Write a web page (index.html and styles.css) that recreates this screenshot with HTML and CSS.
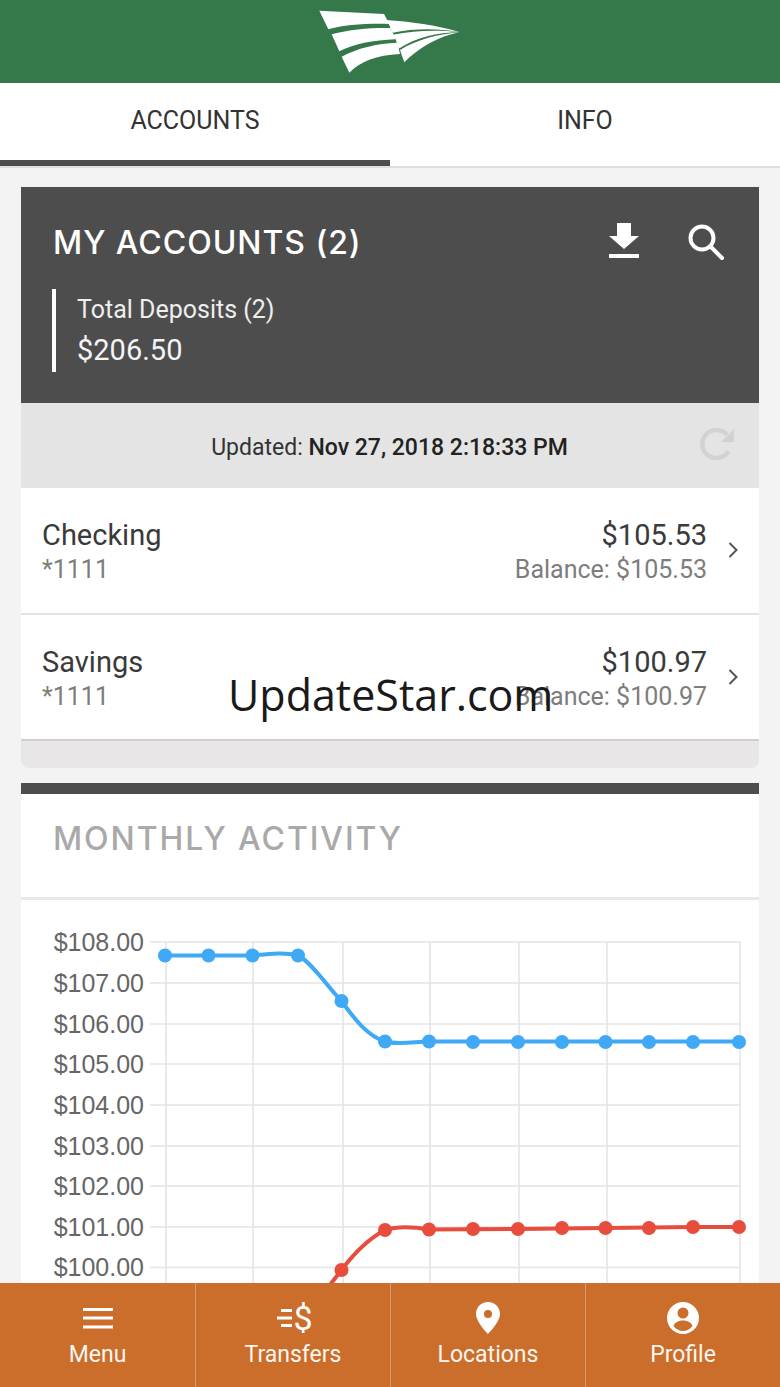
FILE: index.html
```html
<!DOCTYPE html>
<html lang="en">
<head>
<meta charset="utf-8">
<title>My Accounts</title>
<link rel="stylesheet" href="styles.css">
</head>
<body>
<div class="app">
  <header class="brand">
    <svg class="logo" viewBox="0 0 780 270" width="260" height="90" aria-hidden="true">
      <path d="M178 32 L372 42 L388 72 C320 70 250 75 205 88 Z"/>
      <path d="M215 103 C270 88 330 83 392 84 L407 118 C340 120 280 132 238 154 Z"/>
      <path d="M245 170 C290 145 350 130 412 128 L420 162 C350 165 300 185 268 218 Z"/>
      <path d="M378 60 C450 65 530 75 598 96 C530 84 460 85 398 98 L388 76 Z"/>
      <path d="M397 104 C470 90 530 90 598 96 C530 98 470 112 416 146 L407 118 Z"/>
      <path d="M420 150 C470 120 530 103 598 97 C540 108 480 140 433 187 L424 162 Z"/>
    </svg>
  </header>
  <nav class="tabs">
    <div class="tab tab-active">ACCOUNTS</div>
    <div class="tab">INFO</div>
  </nav>
  <main class="content">
    <section class="summary">
      <div class="summary-head">
        <h1 class="summary-title">MY ACCOUNTS (2)</h1>
        <div class="summary-actions">
          <svg class="icon-download" viewBox="0 0 30 36" width="30" height="36" aria-hidden="true"><path d="M8 0H22V13H30L15 26 0 13H8Z"/><rect x="0" y="31" width="30" height="4"/></svg>
          <svg class="icon-search" viewBox="0 0 38 38" width="38" height="38" aria-hidden="true"><circle cx="15" cy="15" r="11.500"/><path d="M23.500 23.500L35 35"/></svg>
        </div>
      </div>
      <div class="total">
        <div class="total-label">Total Deposits (2)</div>
        <div class="total-value">$206.50</div>
      </div>
    </section>
    <div class="updated">
      <span>Updated: <b>Nov 27, 2018 2:18:33 PM</b></span>
      <svg class="icon-refresh" viewBox="0 0 36 36" width="36" height="36" aria-hidden="true"><path d="M28.500 24A14 14 0 1 1 27 8"/><path class="fill" d="M34 2V15H21Z"/></svg>
    </div>
    <ul class="accounts">
      <li class="account">
        <div class="account-left"><div class="account-name">Checking</div><div class="account-sub">*1111</div></div>
        <div class="account-right"><div class="account-amt">$105.53</div><div class="account-sub">Balance: $105.53</div></div>
        <svg class="chev" viewBox="0 0 10 16" width="10" height="16" aria-hidden="true"><path d="M1.500 1L8.500 8 1.500 15"/></svg>
      </li>
      <li class="account">
        <div class="account-left"><div class="account-name">Savings</div><div class="account-sub">*1111</div></div>
        <div class="account-right"><div class="account-amt">$100.97</div><div class="account-sub">Balance: $100.97</div></div>
        <svg class="chev" viewBox="0 0 10 16" width="10" height="16" aria-hidden="true"><path d="M1.500 1L8.500 8 1.500 15"/></svg>
      </li>
    </ul>
    <div class="accounts-foot"></div>
    <section class="activity">
      <h2 class="activity-title">MONTHLY ACTIVITY</h2>
      <svg class="chart" viewBox="21 900 738 500" width="738" height="500" aria-label="Monthly activity chart">
        <g class="grid">
          <path d="M150 942H740M150 983H740M150 1024H740M150 1064H740M150 1105H740M150 1146H740M150 1186H740M150 1227H740M150 1267.500H740"/>
          <path d="M166 942V1400M253 942V1400M343 942V1400M430 942V1400M519 942V1400M607 942V1400M740 942V1400"/>
        </g>
        <g class="ylabels">
          <text x="144" y="951">$108.00</text>
          <text x="144" y="992">$107.00</text>
          <text x="144" y="1033">$106.00</text>
          <text x="144" y="1073">$105.00</text>
          <text x="144" y="1114">$104.00</text>
          <text x="144" y="1155">$103.00</text>
          <text x="144" y="1195">$102.00</text>
          <text x="144" y="1236">$101.00</text>
          <text x="144" y="1276">$100.00</text>
        </g>
        <path class="line line-blue" d="M165 955.500H252.500C268 954 282 952 298 955C314 965 326 985 341.500 1001C355 1020 368 1036 385 1041.500C397 1045 413 1042 429 1041.500H739"/>
        <path class="line line-red" d="M326 1290L341.500 1270C355 1252 370 1238 385 1230C398 1226 414 1227 429 1229.500L518 1229L605 1228L693 1227H739"/>
        <g class="dots dots-blue">
          <circle cx="165" cy="955.500" r="7"/><circle cx="208.500" cy="955.500" r="7"/><circle cx="252.500" cy="955.500" r="7"/><circle cx="298" cy="955.500" r="7"/><circle cx="341.500" cy="1001" r="7"/><circle cx="385" cy="1041.500" r="7"/><circle cx="429" cy="1041.500" r="7"/><circle cx="473" cy="1042" r="7"/><circle cx="518" cy="1042" r="7"/><circle cx="562" cy="1042" r="7"/><circle cx="605.500" cy="1042" r="7"/><circle cx="649" cy="1042" r="7"/><circle cx="693" cy="1042" r="7"/><circle cx="739" cy="1042" r="7"/>
        </g>
        <g class="dots dots-red">
          <circle cx="341.500" cy="1270" r="7"/><circle cx="385" cy="1230" r="7"/><circle cx="429" cy="1229.500" r="7"/><circle cx="473" cy="1229" r="7"/><circle cx="518" cy="1229" r="7"/><circle cx="562" cy="1228" r="7"/><circle cx="605.500" cy="1228" r="7"/><circle cx="649" cy="1228" r="7"/><circle cx="693" cy="1227" r="7"/><circle cx="739" cy="1227" r="7"/>
        </g>
      </svg>
    </section>
  </main>
  <div class="watermark">UpdateStar.com</div>
  <footer class="bottom">
    <div class="bottom-item">
      <svg viewBox="0 0 30 34" width="30" height="34" aria-hidden="true"><path d="M0 7H30V10H0ZM0 15.500H30V18.500H0ZM0 24.500H30V27.500H0Z"/></svg>
      <span>Menu</span>
    </div>
    <div class="bottom-item">
      <svg viewBox="0 0 40 34" width="40" height="34" aria-hidden="true"><path d="M8 8H19V11H8ZM4 15.500H19V18.500H4ZM8 23H19V26H8Z"/><text class="dollar" x="30" y="29">$</text></svg>
      <span>Transfers</span>
    </div>
    <div class="bottom-item">
      <svg viewBox="0 0 24 32" width="24" height="34" aria-hidden="true"><path fill-rule="evenodd" d="M12 0C5 0 0 5.500 0 12C0 20 12 32 12 32S24 20 24 12C24 5.500 19 0 12 0ZM12 8A4 4 0 1 1 12 16A4 4 0 1 1 12 8Z"/></svg>
      <span>Locations</span>
    </div>
    <div class="bottom-item">
      <svg viewBox="0 0 32 32" width="32" height="34" aria-hidden="true"><path fill-rule="evenodd" d="M16 0A16 16 0 1 1 16 32A16 16 0 1 1 16 0ZM16 5.500A5.500 5.500 0 1 0 16 16.500A5.500 5.500 0 1 0 16 5.500ZM16 18.500C11 18.500 7 21 6.500 24C9 27.500 12.500 29 16 29S23 27.500 25.500 24C25 21 21 18.500 16 18.500Z"/></svg>
      <span>Profile</span>
    </div>
  </footer>
</div>
</body>
</html>
```
FILE: styles.css
```css
* { box-sizing: border-box; }
html, body { margin: 0; padding: 0; }
body { font-family: Roboto, "Liberation Sans", sans-serif; background: #f3f3f3; color: #333; }
.app { position: relative; width: 780px; height: 1387px; overflow: hidden; }

.brand { height: 83px; background: #35784a; display: flex; justify-content: center; align-items: flex-start; }
.logo { display: block; fill: #fff; }

.tabs { display: flex; height: 85px; background: #fff; border-bottom: 2px solid #dedede; }
.tab { flex: 1; display: flex; align-items: center; justify-content: center; font-size: 25px; color: #333; padding-bottom: 9px; height: 83px; }
.tab-active { border-bottom: 6px solid #4d4d4d; padding-bottom: 3px; }

.content { padding: 19px 21px 0; }
.summary { height: 216px; background: #4d4d4d; color: #fff; padding: 36px 34px 0 32px; }
.summary-head { display: flex; justify-content: space-between; align-items: flex-start; height: 66px; }
.summary-title { margin: 1px 0 0; font-family: Inter, sans-serif; font-weight: 500; font-size: 32px; line-height: 38px; letter-spacing: 0.95px; }
.summary-actions { display: flex; align-items: flex-start; gap: 48px; }
.icon-download { display: block; fill: #fff; }
.icon-search { display: block; fill: none; stroke: #fff; stroke-width: 4; stroke-linecap: round; }
.total { border-left: 4px solid #fff; padding: 3px 0 0 21px; height: 83px; margin-left: -1px; }
.total-label { font-size: 25px; line-height: 36px; color: #eee; }
.total-value { font-size: 29px; line-height: 42px; margin-top: 1px; color: #f4f4f4; }

.updated { position: relative; height: 85px; background: #e5e4e4; display: flex; align-items: center; justify-content: center; font-size: 23px; color: #333; padding-top: 4px; padding-right: 1px; }
.updated span { color: #333; }
.updated b { font-weight: 500; color: #222; }
.icon-refresh { position: absolute; right: 23px; top: 24px; fill: none; stroke: #d2d2d2; stroke-width: 4.500; }
.icon-refresh .fill { fill: #d2d2d2; stroke: none; }

.accounts { list-style: none; margin: 0; padding: 0; background: #fff; }
.account { height: 127px; padding: 27px 21px 0; display: flex; align-items: flex-start; border-bottom: 2px solid #e3e3e3; }
.account:last-child { height: 126px; border-bottom-color: #cfcfcf; }
.account-left { flex: 1; }
.account-right { text-align: right; }
.account-name, .account-amt { font-size: 29px; line-height: 40px; color: #3a3a3a; }
.account-sub { font-size: 25px; line-height: 30px; margin-top: 0; color: #7d7d7d; }
.chev { fill: none; stroke: #555; stroke-width: 2; margin: 27px 0 0 21px; }
.accounts-foot { height: 27px; background: #e8e6e6; border-radius: 0 0 8px 8px; }

.activity { margin-top: 15px; background: #fff; border-top: 11px solid #4d4d4d; height: 620px; }
.activity-title { margin: 0; height: 106px; padding: 25px 0 0 32px; font-family: Inter, sans-serif; font-weight: 500; font-size: 32px; line-height: 40px; letter-spacing: 1.9px; color: #a9a9a9; border-bottom: 3px solid #e8e8e8; }
.chart { display: block; }
.grid path { fill: none; stroke: #e4e4e4; stroke-width: 1.500; }
.ylabels text { font-family: "Liberation Sans", sans-serif; font-size: 25px; fill: #666; text-anchor: end; }
.line { fill: none; stroke-width: 4; }
.line-blue { stroke: #3fa9f5; }
.line-red { stroke: #e74c3c; }
.dots-blue { fill: #3fa9f5; }
.dots-red { fill: #e74c3c; }

.bottom { position: absolute; left: 0; right: 0; bottom: 0; height: 104px; background: #cb6d2b; display: grid; grid-template-columns: repeat(4, 1fr); color: #fff; }
.bottom-item { display: flex; flex-direction: column; align-items: center; height: 104px; padding-top: 18px; font-size: 23px; border-left: 1px solid #dc9a6c; }
.bottom-item:first-child { border-left: 0; }
.bottom-item svg { display: block; fill: #fff; overflow: visible; }
.bottom-item span { margin-top: 5px; line-height: 30px; color: #fdf6f0; }
.dollar { font-family: Roboto, sans-serif; font-size: 34px; text-anchor: middle; fill: #fff; }

.watermark { position: absolute; left: 228px; top: 668px; font-family: "Open Sans", sans-serif; font-size: 43px; line-height: 54px; color: #1a1a1a; }
```
